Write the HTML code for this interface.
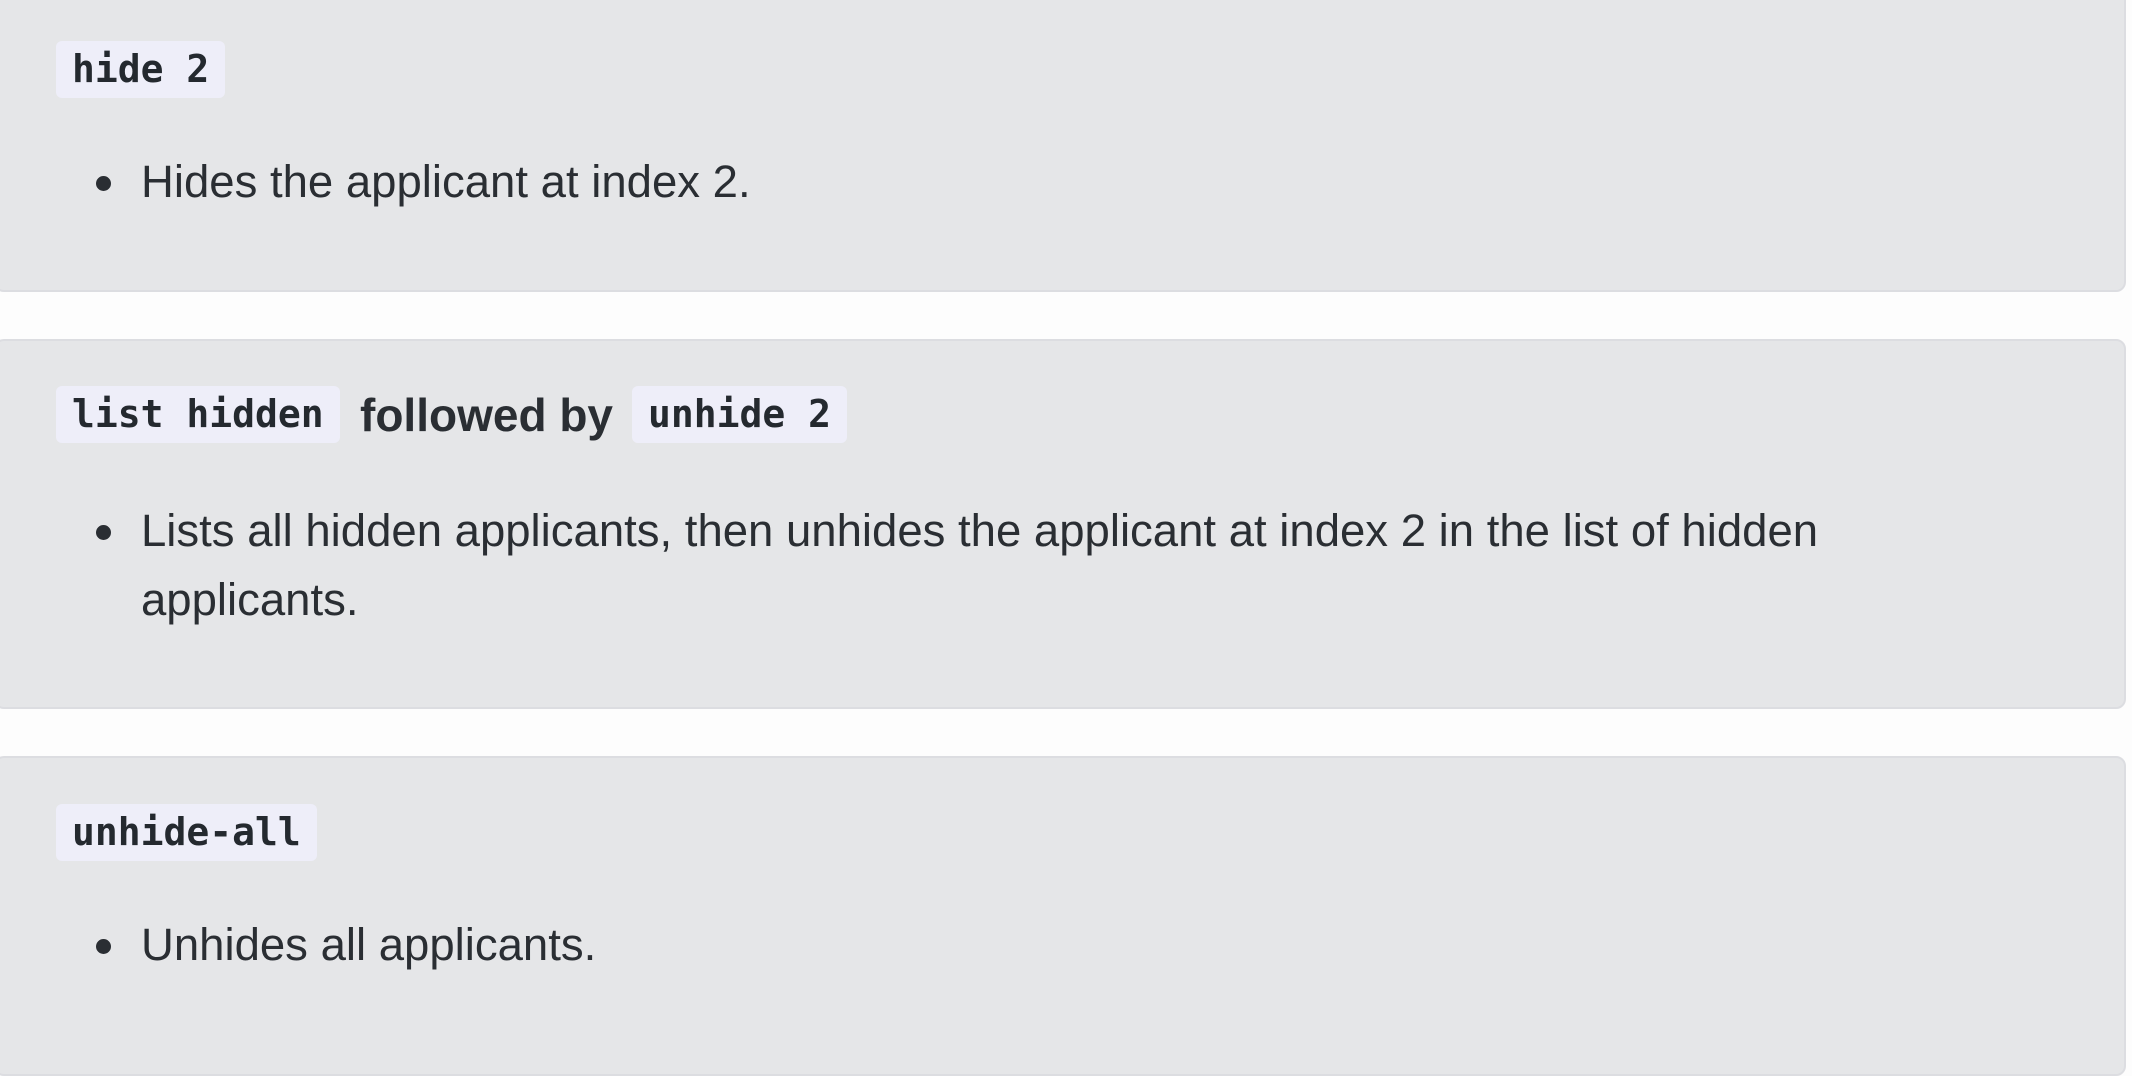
<!DOCTYPE html>
<html><head><meta charset="utf-8"><style>
html,body{margin:0;padding:0;width:2132px;height:1058px;overflow:hidden;background:#fdfdfd;}
.card{position:absolute;left:-6px;width:2132px;background:#e5e6e8;border:2px solid #dcdde1;border-radius:10px;box-sizing:border-box;}
.code{position:absolute;background:#eeeef9;border-radius:6px;font-family:"DejaVu Sans Mono","Liberation Mono",monospace;font-weight:bold;font-size:38px;color:#24292f;line-height:57px;padding:0 16px;white-space:pre;box-sizing:border-box;height:57px;}
.t{position:absolute;font-family:"Liberation Sans",sans-serif;font-size:45.5px;color:#2a2e33;white-space:nowrap;}
.b{font-weight:bold;font-size:46px;}
.dot{position:absolute;width:15px;height:15px;border-radius:50%;background:#2a2e33;}
</style></head><body>
<div class="card" style="top:-20px;height:312px;"></div>
<div class="card" style="top:339px;height:370px;"></div>
<div class="card" style="top:756px;height:320px;"></div>

<div class="code" style="left:56px;top:41px;">hide 2</div>
<div class="dot" style="left:96px;top:176px;"></div>
<div class="t" style="left:141px;top:156px;">Hides the applicant at index 2.</div>

<div class="code" style="left:56px;top:386px;">list hidden</div>
<div class="t b" style="left:360px;top:388px;">followed by</div>
<div class="code" style="left:632px;top:386px;">unhide 2</div>
<div class="dot" style="left:96px;top:525px;"></div>
<div class="t" style="left:141px;top:505px;">Lists all hidden applicants, then unhides the applicant at index 2 in the list of hidden</div>
<div class="t" style="left:141px;top:574px;">applicants.</div>

<div class="code" style="left:56px;top:804px;">unhide-all</div>
<div class="dot" style="left:96px;top:939px;"></div>
<div class="t" style="left:141px;top:919px;">Unhides all applicants.</div>
</body></html>
